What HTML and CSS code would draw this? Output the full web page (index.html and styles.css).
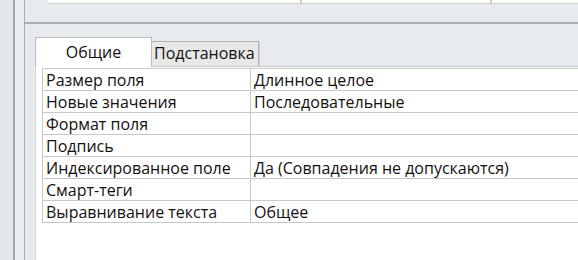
FILE: index.html
```html
<!DOCTYPE html>
<html>
<head>
  <title>Свойства поля</title>
  <link rel="stylesheet" href="styles.css">
</head>
<body>
  <div class="window">
    <div class="rail-outer"></div>
    <div class="rail-inner"></div>

    <div class="main">
      <div class="field-grid">
        <div class="field-cells">
          <div class="cell cell-name"></div>
          <div class="cell cell-type"></div>
          <div class="cell cell-desc"></div>
        </div>
      </div>

      <div class="props">
        <div class="tabs">
          <div class="tab tab-active">Общие</div>
          <div class="tab">Подстановка</div>
        </div>

        <div class="panel">
          <table class="prop-table">
            <tr><td class="prop-name">Размер поля</td><td class="prop-value">Длинное целое</td></tr>
            <tr><td class="prop-name">Новые значения</td><td class="prop-value">Последовательные</td></tr>
            <tr><td class="prop-name">Формат поля</td><td class="prop-value"></td></tr>
            <tr><td class="prop-name">Подпись</td><td class="prop-value"></td></tr>
            <tr><td class="prop-name">Индексированное поле</td><td class="prop-value">Да (Совпадения не допускаются)</td></tr>
            <tr><td class="prop-name">Смарт-теги</td><td class="prop-value"></td></tr>
            <tr><td class="prop-name">Выравнивание текста</td><td class="prop-value">Общее</td></tr>
          </table>
        </div>
      </div>
    </div>
  </div>
</body>
</html>
```

FILE: styles.css
```css
body {
  margin: 0;
  overflow: hidden;
  font-family: "Open Sans", "Noto Sans", sans-serif;
  color: #141010;
}

.window {
  display: flex;
  width: 578px;
  height: 260px;
  background-color: #e8ebee;
}

.rail-outer {
  width: 13px;
  background-color: #e3e6ea;
  border-right: 2px solid #9fa5ac;
}

.rail-inner {
  width: 9px;
  background-color: #eceff2;
  border-right: 1px solid #a8adb3;
}

.main {
  flex: 1;
  display: flex;
  flex-direction: column;
  min-width: 0;
}

/* upper grid, only its bottom edge is visible */
.field-grid {
  height: 24px;
  border-bottom: 2px solid #a9aeb4;
  box-sizing: border-box;
  padding-left: 23px;
}

.field-cells {
  display: flex;
  gap: 2px;
  height: 3px;
  background-color: #c9cdd2;
  border-bottom: 1px solid #c9cdd2;
}

.cell {
  background-color: #fff;
}

.cell-name {
  width: 252px;
}

.cell-type {
  width: 188px;
}

.cell-desc {
  flex: 1;
}

.props {
  flex: 1;
  display: flex;
  flex-direction: column;
  padding-top: 13px;
  padding-left: 10px;
}

.tabs {
  display: flex;
  align-items: flex-end;
  height: 29px;
}

.tab {
  font-size: 16px;
  text-align: center;
  box-sizing: border-box;
  white-space: nowrap;
}

.tab-active {
  width: 117px;
  height: 30px;
  margin-bottom: -1px;
  background-color: #fff;
  border: 1px solid #b9bcc0;
  border-bottom: none;
  padding-top: 3px;
  position: relative;
  z-index: 1;
}

.tab:not(.tab-active) {
  height: 25px;
  line-height: 23px;
  padding: 0 3px 0 2px;
  background-color: #e8e8e8;
  border: 1px solid #b0b2b5;
  border-bottom: none;
  border-left: none;
  box-shadow: 1px 0 0 #d0d2d5;
}

.panel {
  flex: 1;
  background-color: #fff;
  border-top: 1px solid #c6c8cb;
  border-left: 1px solid #d6d8db;
  padding-top: 1px;
  padding-left: 6px;
}

.prop-table {
  border-collapse: collapse;
  width: 100%;
  font-size: 16px;
}

.prop-table td {
  height: 20px;
  padding: 1px 3px 0;
  border: 1px solid #c8c8c8;
  border-right: none;
  white-space: nowrap;
  line-height: 20px;
}

.prop-name {
  width: 201px;
}
```
